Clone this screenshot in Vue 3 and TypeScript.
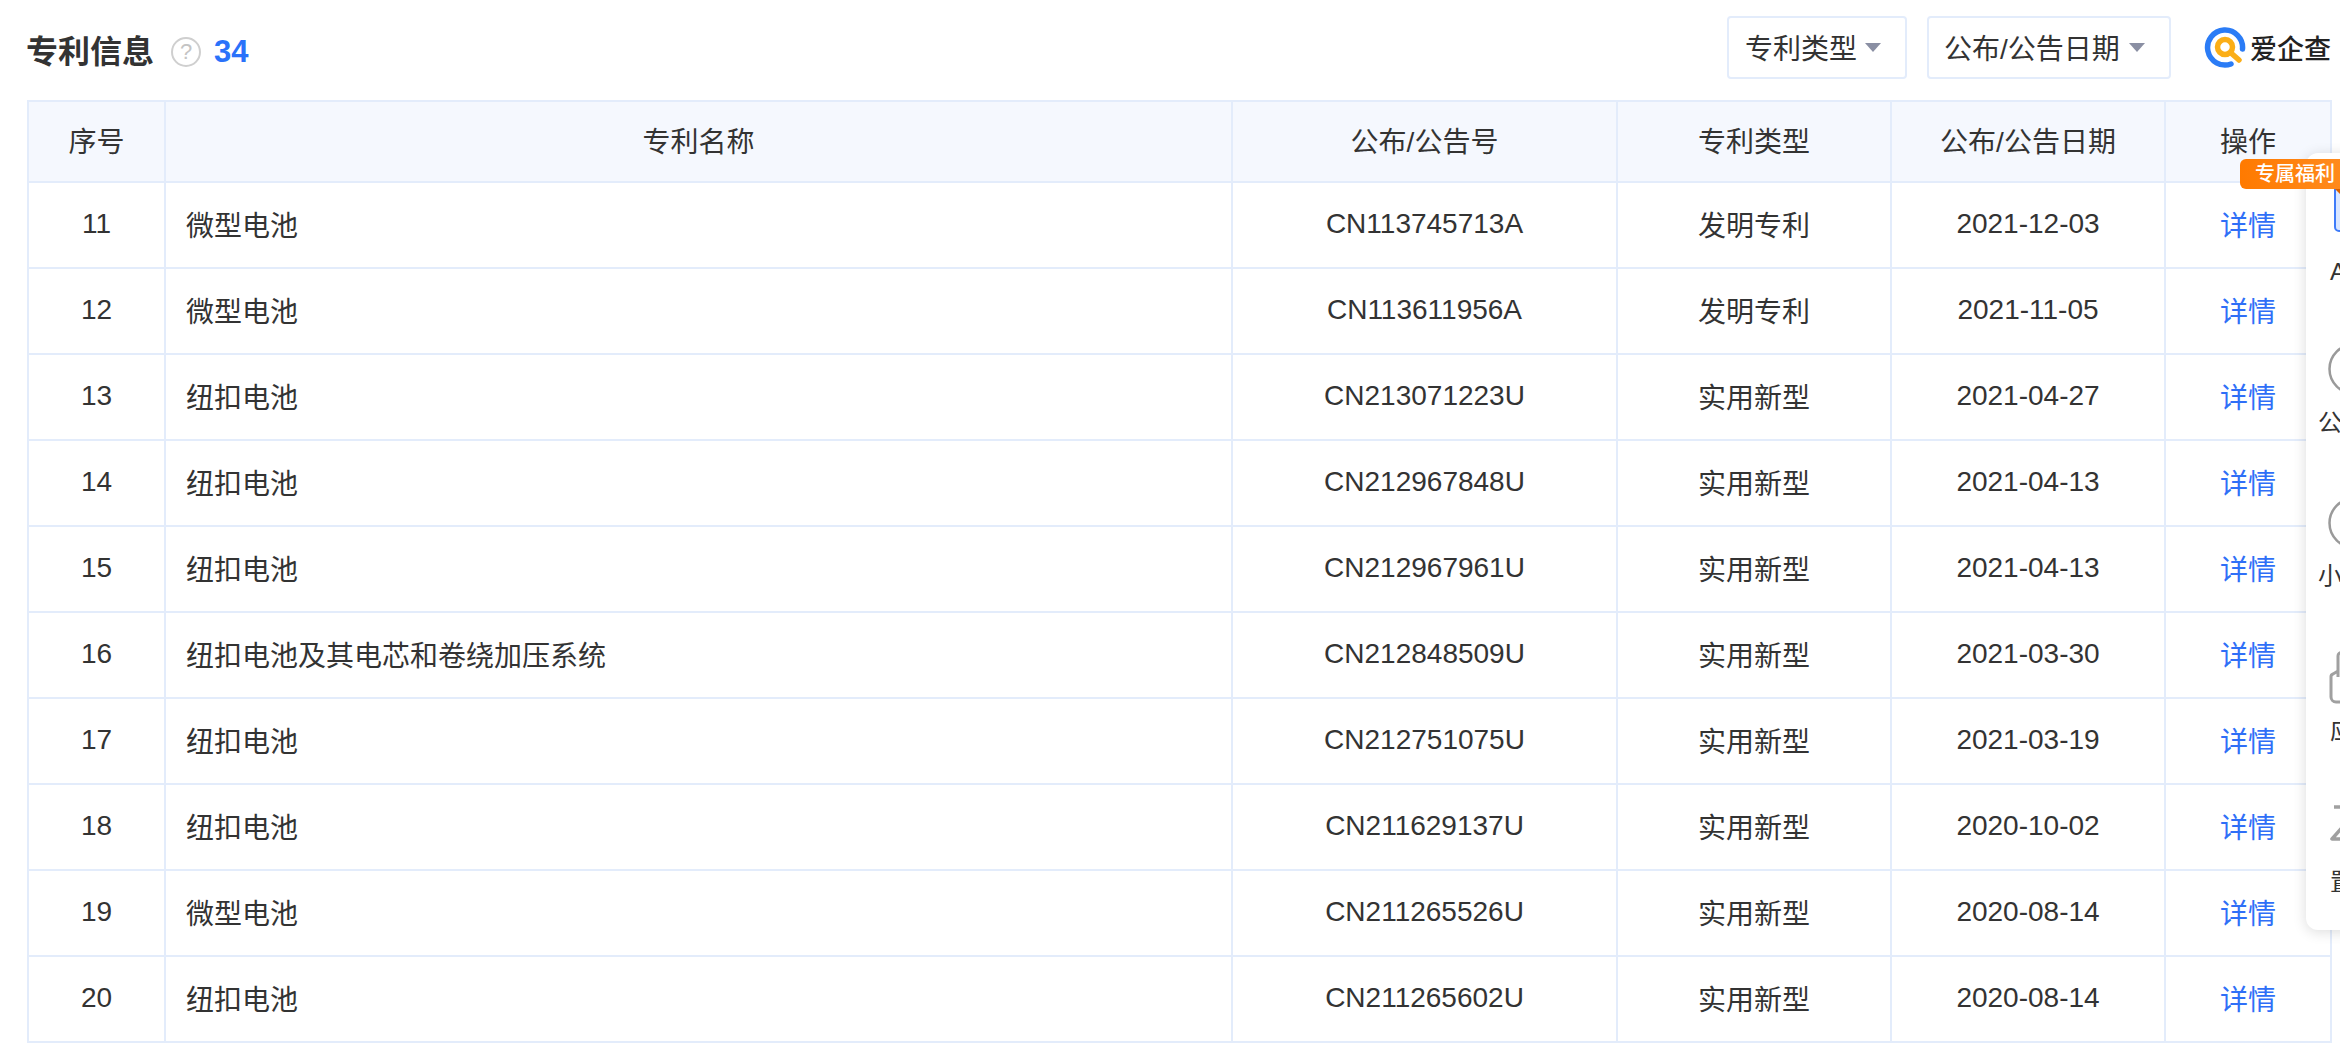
<script setup lang="ts">
interface Row { no: number; name: string; code: string; type: string; date: string }
const rows: Row[] = [
  { no: 11, name: '微型电池', code: 'CN113745713A', type: '发明专利', date: '2021-12-03' },
  { no: 12, name: '微型电池', code: 'CN113611956A', type: '发明专利', date: '2021-11-05' },
  { no: 13, name: '纽扣电池', code: 'CN213071223U', type: '实用新型', date: '2021-04-27' },
  { no: 14, name: '纽扣电池', code: 'CN212967848U', type: '实用新型', date: '2021-04-13' },
  { no: 15, name: '纽扣电池', code: 'CN212967961U', type: '实用新型', date: '2021-04-13' },
  { no: 16, name: '纽扣电池及其电芯和卷绕加压系统', code: 'CN212848509U', type: '实用新型', date: '2021-03-30' },
  { no: 17, name: '纽扣电池', code: 'CN212751075U', type: '实用新型', date: '2021-03-19' },
  { no: 18, name: '纽扣电池', code: 'CN211629137U', type: '实用新型', date: '2020-10-02' },
  { no: 19, name: '微型电池', code: 'CN211265526U', type: '实用新型', date: '2020-08-14' },
  { no: 20, name: '纽扣电池', code: 'CN211265602U', type: '实用新型', date: '2020-08-14' },
]
</script>

<template>
  <div class="page">
    <header class="head">
      <div class="lead">
        <h2 class="title">专利信息</h2>
        <span class="help">?</span>
        <span class="count">34</span>
      </div>
      <div class="spacer"></div>
      <button class="select first">专利类型<i class="caret"></i></button>
      <button class="select second">公布/公告日期<i class="caret"></i></button>
      <div class="logo">
        <svg class="logo-mark" width="42" height="42" viewBox="0 0 42 42">
          <path d="M38.500 22A17.500 17.500 0 1 0 27 37" fill="none" stroke="#2b7cf6" stroke-width="5.500" stroke-linecap="round" />
          <circle cx="21" cy="20" r="7.500" fill="none" stroke="#fbae17" stroke-width="5.500" />
          <path d="M27 26L35 33" stroke="#fbae17" stroke-width="5.500" stroke-linecap="round" />
        </svg>
        <span class="logo-text">爱企查</span>
      </div>
    </header>

    <table class="grid">
      <colgroup>
        <col class="c1" /><col class="c2" /><col class="c3" /><col class="c4" /><col class="c5" /><col class="c6" />
      </colgroup>
      <thead>
        <tr>
          <th>序号</th><th>专利名称</th><th>公布/公告号</th><th>专利类型</th><th>公布/公告日期</th><th>操作</th>
        </tr>
      </thead>
      <tbody>
        <tr v-for="r in rows" :key="r.no">
          <td>{{ r.no }}</td>
          <td class="name">{{ r.name }}</td>
          <td>{{ r.code }}</td>
          <td>{{ r.type }}</td>
          <td>{{ r.date }}</td>
          <td class="link">详情</td>
        </tr>
      </tbody>
    </table>

    <aside class="panel">
      <div class="badge">专属福利</div>
      <div class="app-icon"></div>
      <div class="label l-app">APP</div>
      <svg class="ic ic-1" width="52" height="52" viewBox="0 0 52 52">
        <circle cx="26" cy="26" r="24.500" fill="none" stroke="#9a9a9a" stroke-width="2.500" />
        <path d="M12 28h8M26 16v20" stroke="#9a9a9a" stroke-width="2.500" fill="none" />
      </svg>
      <div class="label l-1">公众号</div>
      <svg class="ic ic-2" width="52" height="52" viewBox="0 0 52 52">
        <circle cx="26" cy="26" r="24.500" fill="none" stroke="#9a9a9a" stroke-width="2.500" />
        <path d="M20 32a6 6 0 1 0 6-6a6 6 0 1 1 6-6" stroke="#9a9a9a" stroke-width="2.500" fill="none" />
      </svg>
      <div class="label l-2">小程序</div>
      <svg class="ic ic-3" width="52" height="54" viewBox="0 0 52 54">
        <path d="M10 27V6a3.500 3.500 0 0 1 7 0V22H41a4 4 0 0 1 4 4V47a5 5 0 0 1-5 5H8a5 5 0 0 1-5-5V27a3 3 0 0 1 2-3L10 21" fill="none" stroke="#a0a0a0" stroke-width="3" stroke-linejoin="round" />
      </svg>
      <div class="label l-3">应用</div>
      <svg class="ic ic-4" width="52" height="42" viewBox="0 0 52 42">
        <path d="M6 7H46" stroke="#a0a0a0" stroke-width="3.500" fill="none" />
        <path d="M4 39H48L26 14Z" fill="none" stroke="#a0a0a0" stroke-width="3.500" stroke-linejoin="round" />
      </svg>
      <div class="label l-4">置顶</div>
    </aside>
  </div>
</template>

<style>
html, body { margin: 0; padding: 0; overflow: hidden; background: #fff; }
</style>

<style scoped>
.page {
  position: relative;
  width: 2340px;
  height: 1048px;
  overflow: hidden;
  background: #fff;
  color: #333;
  font-family: "Liberation Sans", "Noto Sans CJK SC", sans-serif;
  font-size: 28px;
}
.head {
  display: flex;
  align-items: center;
  height: 100px;
  box-sizing: border-box;
  padding: 0 9px 6px 26px;
}
.lead {
  display: flex;
  align-items: center;
  margin-top: 10px;
}
.title {
  margin: 0;
  font-size: 32px;
  font-weight: 700;
  line-height: 44px;
  color: #333;
}
.help {
  width: 30px;
  height: 30px;
  box-sizing: border-box;
  margin-left: 17px;
  border: 2px solid #cfcfcf;
  border-radius: 50%;
  color: #c4c4c4;
  font-size: 22px;
  line-height: 26px;
  text-align: center;
}
.count {
  margin-left: 13px;
  color: #2a72fa;
  font-size: 31px;
  font-weight: 700;
}
.spacer { flex: 1; }
.select {
  display: flex;
  align-items: center;
  height: 63px;
  box-sizing: border-box;
  background: #fff;
  border: 2px solid #e3ecfb;
  border-radius: 4px;
  color: #333;
  font: inherit;
  font-size: 28px;
}
.first { width: 180px; padding: 0 0 0 16px; }
.second { width: 244px; margin-left: 20px; padding: 0 0 0 15px; }
.caret {
  width: 0;
  height: 0;
  border-left: 8px solid transparent;
  border-right: 8px solid transparent;
  border-top: 9px solid #8a8fa3;
}
.first .caret { margin-left: 8px; }
.second .caret { margin-left: 9px; }
.logo {
  display: flex;
  align-items: center;
  margin-left: 33px;
  margin-top: 1px;
  width: 127px;
}
.logo-mark { flex: none; }
.logo-text {
  margin-left: 4px;
  font-size: 27px;
  font-weight: 500;
  color: #222;
  white-space: nowrap;
}
.grid {
  width: 2303px;
  margin-left: 27px;
  border-collapse: collapse;
  table-layout: fixed;
}
.c1 { width: 137px; }
.c2 { width: 1067px; }
.c3 { width: 385px; }
.c4 { width: 274px; }
.c5 { width: 274px; }
.c6 { width: 166px; }
th, td {
  height: 86px;
  padding: 0 0 2px;
  box-sizing: border-box;
  border: 2px solid #e3ecfb;
  text-align: center;
  font-weight: 400;
  font-size: 28px;
  color: #333;
}
th { background: #f5f8fe; height: 81px; padding-bottom: 4px; }
td.name { text-align: left; padding-left: 20px; }
td.link { color: #2f6ff7; }
.panel {
  position: absolute;
  left: 2306px;
  top: 153px;
  width: 96px;
  height: 777px;
  background: #fff;
  border-radius: 12px;
  box-shadow: 0 2px 14px rgba(0, 0, 0, 0.14);
  display: flex;
  flex-direction: column;
  align-items: center;
}
.badge {
  position: absolute;
  left: -66px;
  top: 6px;
  width: 100px;
  height: 30px;
  box-sizing: border-box;
  padding-left: 15px;
  border-radius: 6px 0 0 6px;
  background: linear-gradient(90deg, #ff7a00, #ff8a1c);
  color: #fff;
  font-size: 20px;
  font-weight: 500;
  line-height: 30px;
  white-space: nowrap;
  z-index: 2;
}
.badge::after {
  content: "";
  position: absolute;
  right: 0;
  top: 30px;
  border-top: 5px solid #d95f00;
  border-left: 5px solid transparent;
}
.app-icon {
  flex: none;
  box-sizing: border-box;
  width: 40px;
  height: 59px;
  margin-top: 20px;
  background: #d9e6ff;
  border: 2px solid #3e7bf9;
  border-radius: 5px;
}
.ic { display: block; flex: none; }
.ic-1 { margin-top: 54px; }
.ic-2 { margin-top: 57px; }
.ic-3 { margin-top: 57px; }
.ic-4 { margin-top: 52px; }
.label {
  flex: none;
  height: 34px;
  font-size: 24px;
  line-height: 34px;
  color: #333;
  white-space: nowrap;
}
.l-app { margin-top: 23px; }
.l-1 { margin-top: 11px; }
.l-2 { margin-top: 10px; }
.l-3 { margin-top: 10px; }
.l-4 { margin-top: 23px; }
</style>
